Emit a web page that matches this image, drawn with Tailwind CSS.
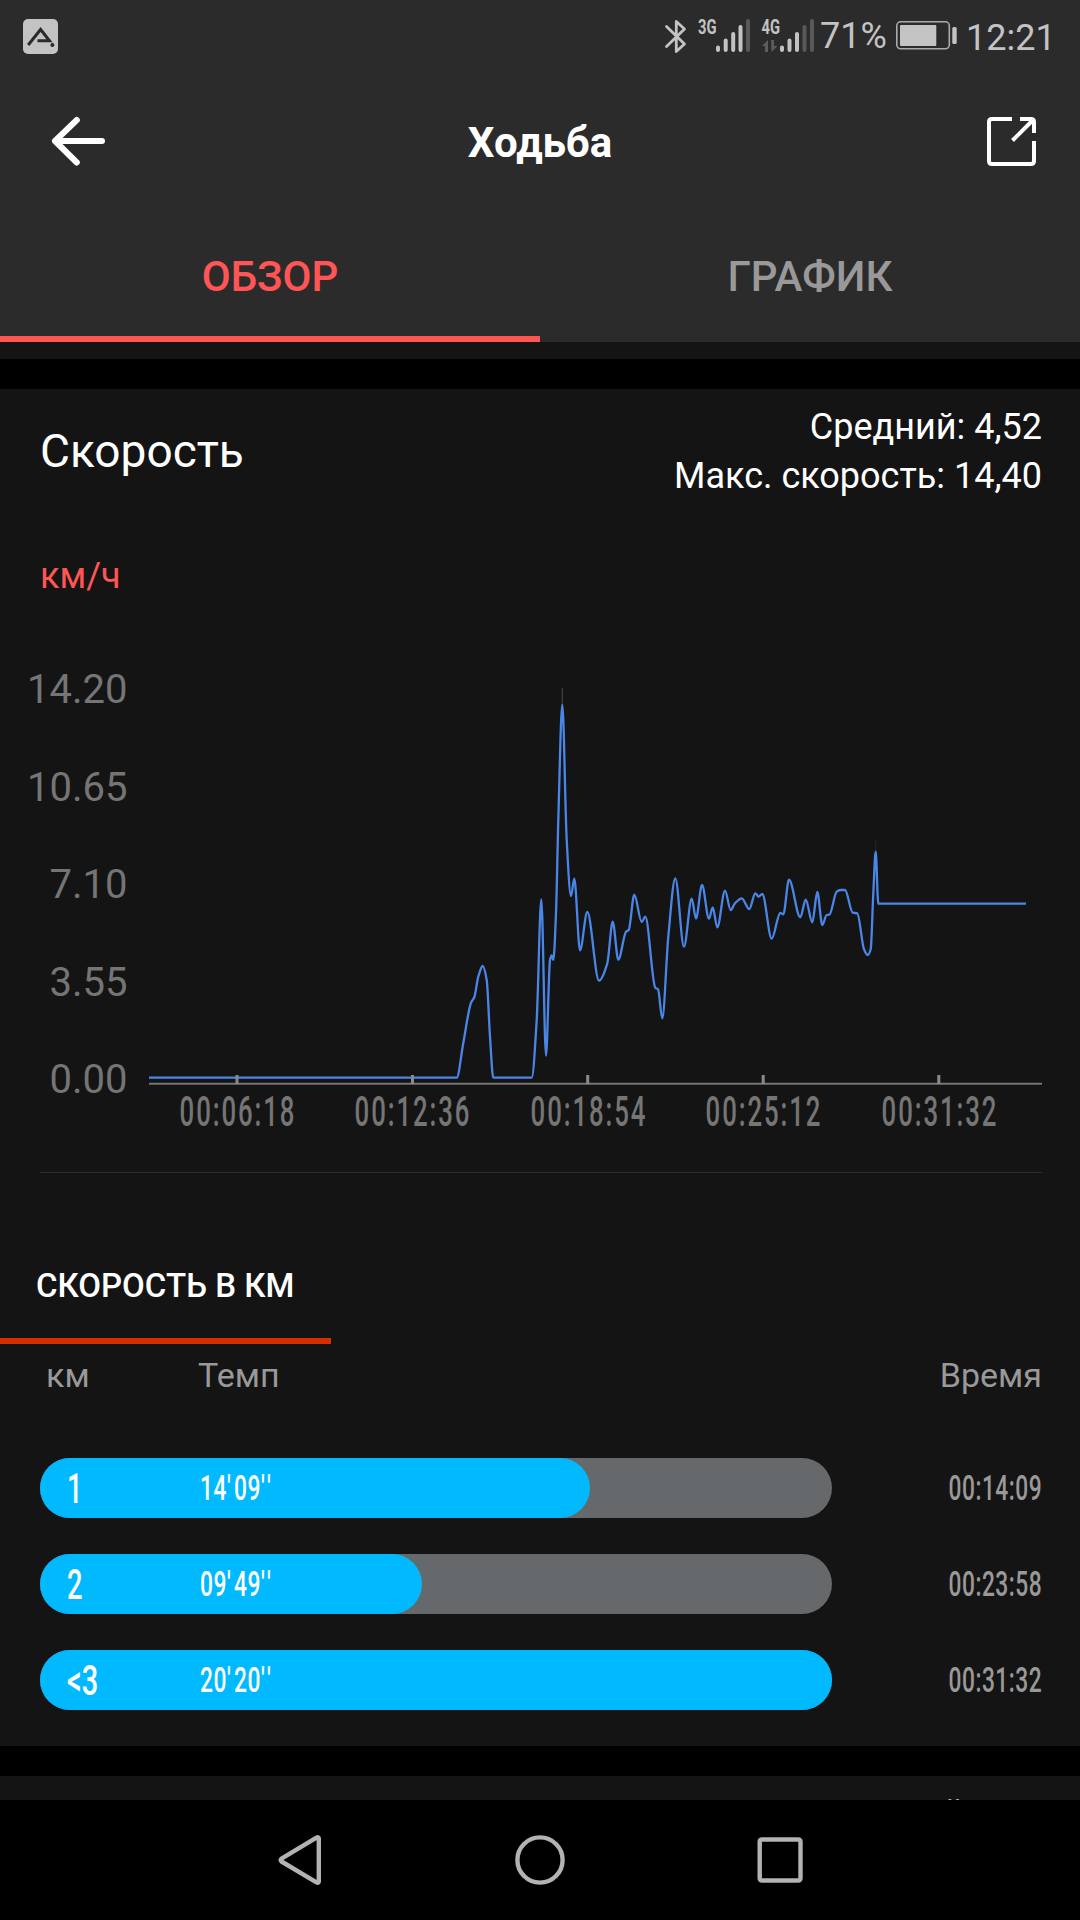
<!DOCTYPE html>
<html lang="ru">

<head>
    <meta charset="UTF-8">
    <meta name="viewport" content="width=device-width, initial-scale=1.0">
    <title>Ходьба</title>
    <script src="https://cdn.jsdelivr.net/npm/@tailwindcss/browser@4"></script>
</head>

<body class="bg-black">

    <div class="w-[1080px] h-[1920px] flex flex-col overflow-hidden bg-[#141414] text-white font-['Roboto',sans-serif]">

        <header class="h-[342px] shrink-0 bg-[#2b2b2b]">
            <!-- Status bar -->
            <div class="h-[72px] flex justify-between text-[#c3c3c3]">
                <svg class="w-[72px] h-[72px]" viewBox="0 0 72 72" fill="none">
                    <rect x="23" y="19" width="35" height="35" rx="5" fill="#c3c3c3" />
                    <path d="M28.2 45 L40.6 29.5 L49.5 40.8 H37.5" stroke="#2b2b2b" stroke-width="3" />
                    <circle cx="52.4" cy="45" r="2" fill="#2b2b2b" />
                </svg>
                <div class="flex">
                    <svg class="w-[156px] h-[72px]" viewBox="660 0 156 72" fill="none" stroke-linecap="round">
                        <path d="M666.5 26.5 L684.5 44 L676.3 51.5 V21.5 L684.5 29 L666.5 46.5" stroke="#c3c3c3" stroke-width="2.8" stroke-linejoin="round" />
                        <g stroke="#c3c3c3" stroke-width="4">
                            <path d="M718 47.5 V50 M725.7 40.5 V50 M733.2 34 V50 M740.5 27 V50" />
                            <path d="M782 47.5 V50 M789.5 40.5 V50 M797 34 V50" />
                            <path d="M748 21 V50 M804.5 27 V50 M812 21 V50" stroke="#595959" />
                        </g>
                        <path d="M762 46 L768 40 V52 H765 V46 Z M771 40 H774 V46 H777.5 L771.5 52 Z" fill="#5c5c5c" />
                        <g fill="#c3c3c3" font-size="20" font-weight="700">
                            <text x="698" y="34" textLength="18.5" lengthAdjust="spacingAndGlyphs">3G</text>
                            <text x="761.5" y="34" textLength="18.5" lengthAdjust="spacingAndGlyphs">4G</text>
                        </g>
                    </svg>
                    <span class="w-[76px] pl-[4px] text-[36px] leading-[72px]">71%</span>
                    <svg class="w-[68px] h-[72px]" viewBox="892 0 68 72" fill="none">
                        <rect x="896.8" y="21.8" width="52.5" height="27" rx="4" stroke="#aaaaaa" stroke-width="1.6" />
                        <rect x="900" y="25" width="36.3" height="21" rx="1" fill="#c3c3c3" />
                        <rect x="952.3" y="27" width="4.4" height="17" rx="1.5" fill="#c3c3c3" />
                    </svg>
                    <span class="w-[120px] pl-[6px] text-[36px] leading-[76px]">12:21</span>
                </div>
            </div>

            <!-- Title bar -->
            <div class="h-[140px] flex items-center justify-between">
                <svg class="w-[140px] h-[140px]" viewBox="0 72 140 140" fill="none" stroke="#ffffff" stroke-width="6" stroke-linecap="round" stroke-linejoin="round">
                    <path d="M102 141 H55 M76.8 120 L55 141 L76.8 162.5" />
                </svg>
                <h1 class="text-[42px] font-bold">Ходьба</h1>
                <svg class="w-[140px] h-[140px]" viewBox="940 72 140 140" fill="none" stroke="#ffffff" stroke-width="4">
                    <path d="M1012 119 H992 Q989 119 989 122 V161 Q989 164 992 164 H1031 Q1034 164 1034 161 V141" />
                    <path d="M1020 119 H1031 Q1034 119 1034 122 V133 M1012.5 140.5 L1033 120" />
                </svg>
            </div>

            <!-- Tabs -->
            <div class="h-[130px] grid grid-cols-2 text-center text-[42px] leading-[118px] font-medium">
                <div class="pt-[6px] text-[#ff5555] border-b-6 border-[#ff5555]">ОБЗОР</div>
                <div class="pt-[6px] text-[#999999]">ГРАФИК</div>
            </div>
        </header>

        <div class="h-[47px] shrink-0 border-t-17 border-[#141414] bg-black"></div>

        <!-- Speed chart -->
        <section class="pt-[14px]">
            <div class="h-[98px] pl-10 pr-[38px] flex items-center justify-between">
                <h2 class="pb-[2px] text-[46px]">Скорость</h2>
                <div class="text-right text-[36px] leading-[49px]">
                    <p>Средний: 4,52</p>
                    <p>Макс. скорость: 14,40</p>
                </div>
            </div>
            <div class="mt-[51px] pl-10 text-[36px] leading-[48px] text-[#ff5555]">км/ч</div>
            <svg class="block w-[1080px] h-[560px]" viewBox="0 600 1080 560" fill="none">
                <g fill="#757575" font-size="40" text-anchor="end">
                    <text x="127.5" y="703">14.20</text>
                    <text x="127.5" y="801">10.65</text>
                    <text x="127.5" y="898">7.10</text>
                    <text x="127.5" y="996">3.55</text>
                    <text x="127.5" y="1093">0.00</text>
                </g>
                <path d="M562.3 688 V706" stroke="#4a4a4a" />
                <path d="M875.7 840 V852" stroke="#262626" />
                <path id="speed-line" stroke="#4a86e8" stroke-width="2.3" stroke-linejoin="round" />
                <path d="M149 1083.7 H1042" stroke="#757575" stroke-width="2" />
                <path d="M237 1075 V1084 M412.5 1075 V1084 M587.7 1075 V1084 M763.2 1075 V1084 M938.8 1075 V1084" stroke="#8a8a8a" stroke-width="3" />
                <g fill="#757575" font-size="43" font-weight="500" letter-spacing="3.2" text-anchor="middle">
                    <text transform="translate(238 1126) scale(.6 1)">00:06:18</text>
                    <text transform="translate(413 1126) scale(.6 1)">00:12:36</text>
                    <text transform="translate(589 1126) scale(.6 1)">00:18:54</text>
                    <text transform="translate(764 1126) scale(.6 1)">00:25:12</text>
                    <text transform="translate(940 1126) scale(.6 1)">00:31:32</text>
                </g>
            </svg>
            <div class="mt-3 ml-10 mr-[38px] h-px bg-[#2d2d2d]"></div>
        </section>

        <!-- Splits per km -->
        <section>
            <h3 class="w-[331px] pt-[89px] pb-[28px] pl-9 border-b-6 border-[#d32f00] text-[33px] leading-[48px] font-medium whitespace-nowrap">СКОРОСТЬ В КМ</h3>
            <div class="h-[114px] pt-[6px] pl-[46px] pr-[38px] flex text-[34px] leading-[50px] text-[#999999]">
                <span class="w-[152px]">км</span>
                <span>Темп</span>
                <span class="ml-auto">Время</span>
            </div>
            <div class="pl-10 pr-[38px] flex flex-col gap-9">
                <div class="h-[60px] flex items-center justify-between">
                    <div class="w-[792px] h-full rounded-full bg-[#65696c]">
                        <div class="h-full rounded-full bg-[#00b9ff] flex items-center" style="width: 69.4%">
                            <span class="w-[160px] pl-[27px]"><span class="inline-block origin-left scale-x-[.65] text-[42px] font-medium">1</span></span>
                            <span class="inline-block origin-left scale-x-[.65] pt-[2px] text-[35px] tracking-[.8px] font-medium">14<span class="tracking-[5px]">'</span>09<span class="tracking-[5px]">''</span></span>
                        </div>
                    </div>
                    <span class="inline-block origin-right scale-x-[.65] pt-[2px] text-[35px] tracking-[.8px] font-medium text-[#999999]">00:14:09</span>
                </div>
                <div class="h-[60px] flex items-center justify-between">
                    <div class="w-[792px] h-full rounded-full bg-[#65696c]">
                        <div class="h-full rounded-full bg-[#00b9ff] flex items-center" style="width: 48.2%">
                            <span class="w-[160px] pl-[27px]"><span class="inline-block origin-left scale-x-[.65] text-[42px] font-medium">2</span></span>
                            <span class="inline-block origin-left scale-x-[.65] pt-[2px] text-[35px] tracking-[.8px] font-medium">09<span class="tracking-[5px]">'</span>49<span class="tracking-[5px]">''</span></span>
                        </div>
                    </div>
                    <span class="inline-block origin-right scale-x-[.65] pt-[2px] text-[35px] tracking-[.8px] font-medium text-[#999999]">00:23:58</span>
                </div>
                <div class="h-[60px] flex items-center justify-between">
                    <div class="w-[792px] h-full rounded-full bg-[#65696c]">
                        <div class="h-full rounded-full bg-[#00b9ff] flex items-center" style="width: 100%">
                            <span class="w-[160px] pl-[27px]"><span class="inline-block origin-left scale-x-[.69] text-[42px] font-medium">&lt;3</span></span>
                            <span class="inline-block origin-left scale-x-[.65] pt-[2px] text-[35px] tracking-[.8px] font-medium">20<span class="tracking-[5px]">'</span>20<span class="tracking-[5px]">''</span></span>
                        </div>
                    </div>
                    <span class="inline-block origin-right scale-x-[.65] pt-[2px] text-[35px] tracking-[.8px] font-medium text-[#999999]">00:31:32</span>
                </div>
            </div>
        </section>

        <div class="mt-9 h-[30px] shrink-0 bg-black"></div>

        <!-- Next section, cut off by the navigation bar -->
        <section class="h-6 shrink-0 overflow-hidden pt-[13px] pr-[116px] text-right text-[36px] leading-[49px] text-[#b3b3b3]">
            <p>й</p>
        </section>

        <!-- Navigation bar -->
        <nav class="h-[120px] shrink-0 bg-black">
            <svg class="block w-[1080px] h-[120px]" viewBox="0 1800 1080 120" fill="none" stroke="#b3b3b3" stroke-width="4.4" stroke-linejoin="round">
                <path d="M318.8 1838.5 V1881.5 Q318.5 1883.5 316.5 1882.3 L281.5 1861.5 Q279.8 1860 281.5 1858.7 L316.5 1837.7 Q318.5 1836.5 318.8 1838.5 Z" />
                <circle cx="540" cy="1860" r="22.6" />
                <rect x="759.7" y="1839.5" width="40.8" height="41" rx="2" />
            </svg>
        </nav>
    </div>

    <script>
    const points = [
        [149, 1077.7], [456.7, 1077.7], [463.3, 1043], [471, 1002.7], [474.3, 997.3], [478.3, 976.7], [482.7, 966],
        [486.7, 980], [490, 1036.7], [493.3, 1077.7], [531.7, 1077.7], [536.7, 1020], [541.3, 899.3], [546, 1055.7],
        [550, 960], [551.7, 955.3], [553.3, 960], [556, 913.3], [558.3, 820], [562.3, 704.7], [566.7, 840],
        [571, 896], [574.3, 878.7], [580, 950.3], [587.3, 912], [599, 980.7], [607.3, 963.3], [612.7, 921.7],
        [618.3, 959.7], [626, 931.7], [628.7, 930], [634.3, 894.7], [641.7, 922], [645.3, 916.7], [655.3, 987.7],
        [658, 989.3], [662.3, 1018.3], [668.3, 936.7], [675.3, 878.3], [684, 946.7], [691.7, 898.7], [696, 918.7],
        [702, 885], [709, 918.7], [712.7, 907.3], [717.3, 927.3], [725, 890.7], [730.7, 910], [735, 903.3],
        [741.7, 898.3], [749.3, 909], [755.3, 893.3], [758.7, 896.7], [762.3, 894], [771.7, 938.7], [780.3, 913],
        [783.3, 914.3], [789, 879.7], [800.3, 917.3], [805.7, 899.7], [812.3, 922.3], [817.3, 892], [822.3, 925],
        [826.7, 915], [829.3, 914.7], [836.7, 891.7], [840.7, 890], [845, 890], [852.7, 912.7], [857.3, 913.3],
        [864, 949.3], [867.7, 955], [870.7, 949.3], [873.3, 893.3], [875.7, 851.7], [878.3, 903.7], [1026, 903.7]
    ];

    // Monotone cubic curve, flat at every peak and valley
    function smoothPath(p) {
        const slope = i => (p[i + 1][1] - p[i][1]) / (p[i + 1][0] - p[i][0]);
        const tangent = i => {
            if (i === 0 || i === p.length - 1) return 0;
            const a = slope(i - 1), b = slope(i);
            return a * b <= 0 ? 0 : 2 * a * b / (a + b);
        };
        let d = `M${p[0][0]} ${p[0][1]}`;
        for (let i = 0; i < p.length - 1; i++) {
            const h = (p[i + 1][0] - p[i][0]) / 3;
            d += ` C${p[i][0] + h} ${p[i][1] + h * tangent(i)} ${p[i + 1][0] - h} ${p[i + 1][1] - h * tangent(i + 1)} ${p[i + 1][0]} ${p[i + 1][1]}`;
        }
        return d;
    }

    document.getElementById('speed-line').setAttribute('d', smoothPath(points));
    </script>

</body>

</html>
